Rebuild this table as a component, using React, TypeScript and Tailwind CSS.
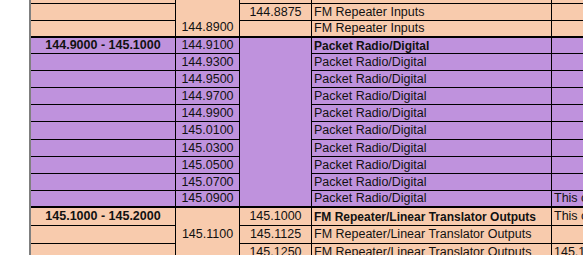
import React from 'react';
import clsx from 'clsx';

const SALMON = 'bg-[#f8cbad]';
const PURPLE = 'bg-[#bf92dd]';

interface CellProps {
  className?: string;
  children?: React.ReactNode;
  bold?: boolean;
  left?: boolean;
}

const Cell: React.FC<CellProps> = ({ className, children, bold, left }) => (
  <div
    className={clsx(
      'flex items-center whitespace-nowrap border-r border-b border-black',
      left ? 'justify-start pl-[2px]' : 'justify-center',
      bold && 'font-bold',
      className,
    )}
  >
    {children}
  </div>
);

const packet = [
  '144.9300',
  '144.9500',
  '144.9700',
  '144.9900',
  '145.0100',
  '145.0300',
  '145.0500',
  '145.0700',
  '145.0900',
];

export default function App() {
  return (
    <div className="w-[583px] h-[255px] overflow-hidden bg-white flex text-[12.5px] leading-none text-[#111] font-['Liberation_Sans',Arial,sans-serif]">
      <div className="w-[29px] shrink-0" />
      <div className="shrink-0 border-l-2 border-[#7f7f7f] grid grid-cols-[145px_64px_72px_240px_100px] grid-rows-[4px_17px_17px_16px_17px_17px_17px_17px_18px_17px_17px_17px_17px_18px_18px_18px]">
        {/* row 0 - cut off at top */}
        <Cell className={SALMON} />
        <Cell className={clsx(SALMON, 'row-span-3 border-b-2 items-end pb-[3px]')}>144.8900</Cell>
        <Cell className={SALMON} />
        <Cell className={SALMON} />
        <Cell className={SALMON} />

        {/* row 1 */}
        <Cell className={SALMON} />
        <Cell className={SALMON}>144.8875</Cell>
        <Cell className={SALMON} left>FM Repeater Inputs</Cell>
        <Cell className={SALMON} />

        {/* row 2 */}
        <Cell className={clsx(SALMON, 'border-b-2')} />
        <Cell className={clsx(SALMON, 'border-b-2')} />
        <Cell className={clsx(SALMON, 'border-b-2')} left>FM Repeater Inputs</Cell>
        <Cell className={clsx(SALMON, 'border-b-2')} />

        {/* packet radio block */}
        <Cell className={PURPLE} bold>144.9000 - 145.1000</Cell>
        <Cell className={PURPLE}>144.9100</Cell>
        <Cell className={clsx(PURPLE, 'row-span-10 border-b-2')} />
        <Cell className={clsx(PURPLE, 'text-[12px]')} left bold>Packet Radio/Digital</Cell>
        <Cell className={PURPLE} />

        {packet.map((f, i) => {
          const last = i === packet.length - 1;
          const b = last ? 'border-b-2' : '';
          return (
            <React.Fragment key={f}>
              <Cell className={clsx(PURPLE, b)} />
              <Cell className={clsx(PURPLE, b)}>{f}</Cell>
              <Cell className={clsx(PURPLE, b)} left>Packet Radio/Digital</Cell>
              <Cell className={clsx(PURPLE, b)} left>
                {last ? 'This channel is shared' : ''}
              </Cell>
            </React.Fragment>
          );
        })}

        {/* FM repeater / linear translator outputs */}
        <Cell className={SALMON} bold>145.1000 - 145.2000</Cell>
        <Cell className={clsx(SALMON, 'row-span-3')}>145.1100</Cell>
        <Cell className={SALMON}>145.1000</Cell>
        <Cell className={clsx(SALMON, 'text-[12px]')} left bold>FM Repeater/Linear Translator Outputs</Cell>
        <Cell className={SALMON} left>This channel is shared</Cell>

        <Cell className={SALMON} />
        <Cell className={SALMON}>145.1125</Cell>
        <Cell className={SALMON} left>FM Repeater/Linear Translator Outputs</Cell>
        <Cell className={SALMON} />

        <Cell className={SALMON} />
        <Cell className={SALMON}>145.1250</Cell>
        <Cell className={SALMON} left>FM Repeater/Linear Translator Outputs</Cell>
        <Cell className={SALMON} left>145.1250</Cell>
      </div>
    </div>
  );
}
